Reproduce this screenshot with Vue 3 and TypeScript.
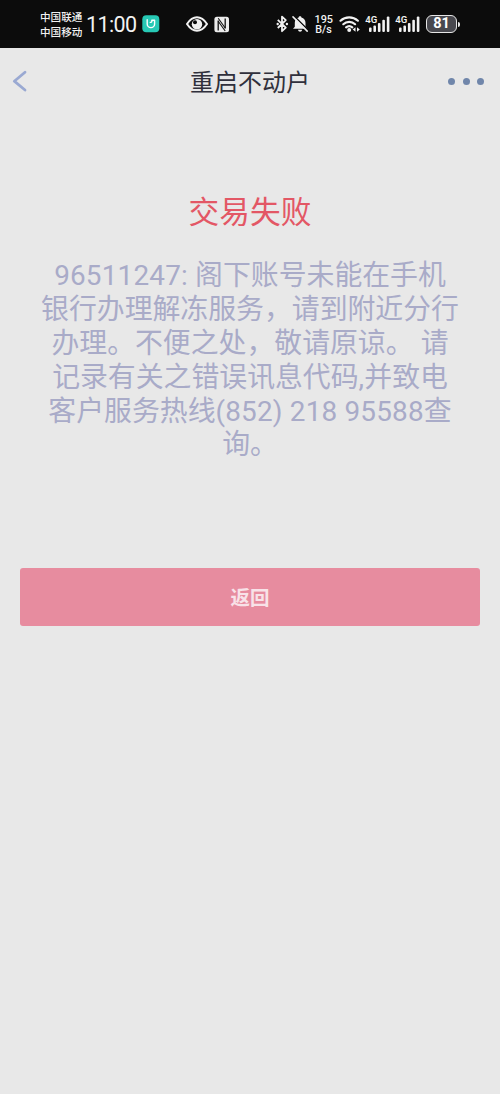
<script setup lang="ts">
interface Run {
  text: string
  latin?: boolean
}

const carriers: string[] = ['中国联通', '中国移动']

const message: Run[][] = [
  [{ text: '96511247: ', latin: true }, { text: '阁下账号未能在手机' }],
  [{ text: '银行办理解冻服务，请到附近分行' }],
  [{ text: '办理。不便之处，敬请原谅。' }, { text: ' ', latin: true }, { text: '请' }],
  [{ text: '记录有关之错误讯息代码' }, { text: ',', latin: true }, { text: '并致电' }],
  [{ text: '客户服务热线' }, { text: '(852) 218 95588', latin: true }, { text: '查' }],
  [{ text: '询。' }],
]

const bars: { x: number; h: number }[] = [
  { x: 4, h: 4.5 },
  { x: 8.4, h: 6.5 },
  { x: 12.9, h: 9 },
  { x: 17.3, h: 12.2 },
  { x: 21.8, h: 15.6 },
]
</script>

<template>
  <div class="screen">
    <header class="status">
      <div class="carriers">
        <span v-for="c in carriers" :key="c">{{ c }}</span>
      </div>
      <span class="clock">11:00</span>
      <svg class="mi" width="18" height="18" viewBox="0 0 18 18">
        <rect x="0.3" y="0.3" width="17" height="17" rx="4" fill="#27c9b5" />
        <path d="M5.200 4.800v4.100a3.700 3.700 0 0 0 7.400 0V5.200H9.800v1.300q0 .9-1.500.9" fill="none" stroke="#fff" stroke-width="1.400" stroke-linecap="round" stroke-linejoin="round" />
      </svg>
      <svg class="eye" width="22" height="18" viewBox="0 0 22 18">
        <path d="M1 9Q5.400 2.300 11 2.300T21 9Q16.600 15.700 11 15.700T1 9Z" fill="none" stroke="#f2f2f2" stroke-width="2" stroke-linejoin="round" />
        <circle cx="11" cy="9.300" r="5.200" fill="#f2f2f2" />
        <circle cx="9" cy="7.300" r="2" fill="#0c0c0c" />
      </svg>
      <svg class="nfc" width="16" height="17" viewBox="0 0 16 17">
        <rect x="0.400" y="0.800" width="14.600" height="15.400" rx="2.500" fill="#ececec" />
        <path d="M4.200 14.500V4.500M11.200 12.500V2.500" fill="none" stroke="#111" stroke-width="1.300" />
        <path d="M4.200 2.200l7 9.800M4.200 5.200l7 9.800" fill="none" stroke="#111" stroke-width="1.100" />
      </svg>
      <svg class="bt" width="13" height="18" viewBox="0 0 13 18">
        <path d="M1.800 4.800l8 7.900-3.800 3.500V1.600l3.800 3.500-8 7.900" fill="none" stroke="#f0f0f0" stroke-width="1.800" stroke-linejoin="round" />
        <circle cx="1.700" cy="9" r="1.200" fill="#f0f0f0" />
        <circle cx="10.900" cy="9" r="1.200" fill="#f0f0f0" />
      </svg>
      <svg class="bell" width="17" height="18" viewBox="0 0 17 18">
        <path d="M8 1.200c.9 0 1.400.5 1.400 1.300 2.700.6 4.100 2.700 4.100 5.300v3.900l1.800 2H1l1.800-2V7.800c0-2.600 1.300-4.700 3.900-5.300 0-.8.500-1.300 1.300-1.300zM6 14.700h4.200c-.2 1.300-1 2-2.100 2s-1.900-.7-2.100-2z" fill="#f0f0f0" />
        <path d="M2.300 1.200l14 14" stroke="#0c0c0c" stroke-width="1.600" />
        <path d="M1 1.900l14.200 14.200" stroke="#f0f0f0" stroke-width="1.500" stroke-linecap="round" />
      </svg>
      <svg class="speed" width="20" height="24" viewBox="0 0 20 24">
        <text x="0.500" y="11.200" textLength="18.500" lengthAdjust="spacingAndGlyphs">195</text>
        <text x="1.200" y="20.700" textLength="16.500" lengthAdjust="spacingAndGlyphs">B/s</text>
      </svg>
      <svg class="wifi" width="22" height="18" viewBox="0 0 22 18">
        <g fill="none" stroke="#f2f2f2" stroke-width="2.200" stroke-linecap="round">
          <path d="M1.500 5.700a13 13 0 0 1 17.400 0" />
          <path d="M4.300 9.200a8.600 8.600 0 0 1 11.800 0" />
          <path d="M7.100 12.400a4.800 4.800 0 0 1 6.200 0" />
        </g>
        <circle cx="10.200" cy="15" r="2" fill="#f2f2f2" />
        <path d="M16.500 12.300v4.400l-2.800-2.200zM18 12.300v4.400l2.800-2.200z" fill="#f2f2f2" />
      </svg>
      <svg v-for="n in 2" :key="n" class="signal" width="26" height="22" viewBox="0 -2 26 22">
        <text x="0.200" y="8" class="gen" textLength="12" lengthAdjust="spacingAndGlyphs">4G</text>
        <rect v-for="b in bars" :key="b.x" :x="b.x" :y="17 - b.h" width="2.600" :height="b.h" rx="1" fill="#f2f2f2" />
      </svg>
      <div class="battery">81</div>
      <i class="nub"></i>
    </header>

    <nav class="bar">
      <svg class="back" width="16" height="24" viewBox="0 0 16 24">
        <path d="M13 3.200L2.300 12.200L13 21" fill="none" stroke="#9aa9d2" stroke-width="2.800" stroke-linecap="round" stroke-linejoin="round" />
      </svg>
      <h1>重启不动户</h1>
      <div class="more"><i></i><i></i><i></i></div>
    </nav>

    <main>
      <h2>交易失败</h2>
      <div class="message">
        <p v-for="(line, i) in message" :key="i"><span v-for="(r, j) in line" :key="j" :class="{ latin: r.latin }">{{ r.text }}</span></p>
      </div>
      <button type="button">返回</button>
    </main>
  </div>
</template>

<style>
body {
  margin: 0;
  background: #e8e8e8;
}
</style>

<style scoped>
.screen {
  width: 500px;
  height: 1094px;
  overflow: hidden;
  background: #e8e8e8;
  font-family: "Noto Sans CJK SC", sans-serif;
}
.status {
  display: flex;
  align-items: center;
  box-sizing: border-box;
  height: 48px;
  padding-left: 40px;
  background: #0c0c0c;
  color: #f2f2f2;
}
.status > * {
  flex: none;
}
.carriers {
  display: flex;
  flex-direction: column;
  width: 43px;
  font-size: 10.600px;
  font-weight: 500;
  line-height: 15px;
  white-space: nowrap;
}
.clock {
  width: 54px;
  margin-left: 3px;
  padding-top: 2px;
  font-family: Roboto, sans-serif;
  font-size: 21.500px;
  font-weight: 400;
  letter-spacing: -0.600px;
  line-height: 46px;
  white-space: nowrap;
}
.mi {
  margin-left: 2px;
}
.eye {
  margin-left: 26px;
}
.nfc {
  margin-left: 6px;
}
.bt {
  margin-left: 46px;
}
.bell {
  margin-left: 3px;
}
.speed {
  margin-left: 5px;
  fill: #f2f2f2;
  font-family: Roboto, sans-serif;
  font-size: 11.500px;
  font-weight: 500;
}
.wifi {
  margin-left: 5px;
}
.signal {
  margin-left: 4px;
}
.gen {
  font-family: Roboto, sans-serif;
  font-size: 9.800px;
  font-weight: 600;
  fill: #f2f2f2;
}
.battery {
  box-sizing: border-box;
  width: 31px;
  height: 18px;
  margin-left: 5px;
  border: 1.500px solid #e6e6e6;
  border-radius: 6px;
  background: #48484e;
  color: #fff;
  font-family: Roboto, sans-serif;
  font-size: 14.500px;
  font-weight: 700;
  line-height: 16px;
  text-align: center;
}
.nub {
  width: 2px;
  height: 5px;
  margin-left: 1px;
  border-radius: 0 2px 2px 0;
  background: #e6e6e6;
}
.bar {
  display: flex;
  align-items: center;
  justify-content: space-between;
  height: 66px;
  padding: 0 16px 0 12px;
}
.back {
  width: 16px;
  margin-right: 24px;
}
.bar h1 {
  margin: 0;
  color: #30303c;
  font-size: 24px;
  font-weight: 400;
  line-height: 36px;
}
.more {
  display: flex;
  gap: 7.500px;
}
.more i {
  width: 7px;
  height: 7px;
  border-radius: 50%;
  background: #7086aa;
}
main {
  display: flex;
  flex-direction: column;
  align-items: center;
}
h2 {
  margin: 73px 0 0;
  color: #e35765;
  font-size: 30.700px;
  font-weight: 400;
  line-height: 46px;
}
.message {
  display: grid;
  grid-auto-rows: 33.900px;
  margin-top: 24px;
  color: #a9abc8;
  font-size: 27.860px;
  line-height: 33.900px;
  text-align: center;
  white-space: pre;
}
.message p {
  margin: 0;
}
.latin {
  font-family: Roboto, sans-serif;
  letter-spacing: 0.200px;
}
button {
  width: 460px;
  height: 58px;
  margin-top: 108px;
  padding: 0;
  border: 0;
  border-radius: 3px;
  background: #e78c9f;
  color: #f8e2e8;
  font-family: inherit;
  font-size: 19.500px;
  font-weight: 700;
  line-height: 58px;
}
</style>
